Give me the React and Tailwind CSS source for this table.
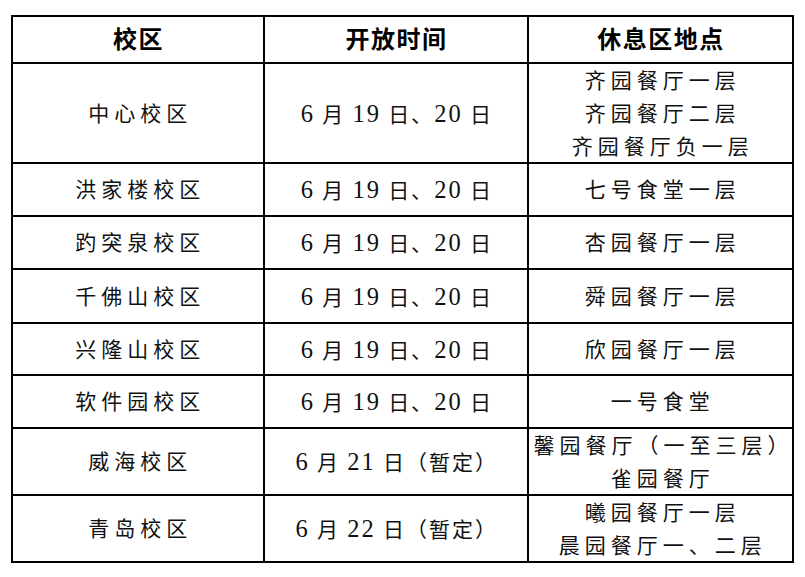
import React from "react";

const Num = ({ children }) => <span className="text-[24.5px]">{children}</span>;

const T1 = () => (
  <span>
    <Num>6</Num> 月 <Num>19</Num> 日、<Num>20</Num> 日
  </span>
);

const rows = [
  { campus: "中心校区", time: <T1 />, place: ["齐园餐厅一层", "齐园餐厅二层", "齐园餐厅负一层"] },
  { campus: "洪家楼校区", time: <T1 />, place: ["七号食堂一层"] },
  { campus: "趵突泉校区", time: <T1 />, place: ["杏园餐厅一层"] },
  { campus: "千佛山校区", time: <T1 />, place: ["舜园餐厅一层"] },
  { campus: "兴隆山校区", time: <T1 />, place: ["欣园餐厅一层"] },
  { campus: "软件园校区", time: <T1 />, place: ["一号食堂"] },
  {
    campus: "威海校区",
    time: (
      <span>
        <Num>6</Num> 月 <Num>21</Num> 日（暂定）
      </span>
    ),
    place: ["馨园餐厅（一至三层）", "雀园餐厅"],
  },
  {
    campus: "青岛校区",
    time: (
      <span>
        <Num>6</Num> 月 <Num>22</Num> 日（暂定）
      </span>
    ),
    place: ["曦园餐厅一层", "晨园餐厅一、二层"],
  },
];

const cjk = { fontFamily: '"Liberation Serif", "Noto Sans CJK SC", serif' };

export default function App() {
  return (
    <div className="w-[805px] h-[577px] bg-white pt-[15px] pl-[11px]" style={cjk}>
      <div className="grid w-fit grid-cols-[250.5px_262.5px_263.5px] grid-rows-[45.5px_98.5px_51.5px_51.5px_52.5px_50.5px_51.5px_65.5px_65.5px] gap-[1.5px] bg-black p-[1.5px]">
        {["校区", "开放时间", "休息区地点"].map((h) => (
          <div
            key={h}
            className="flex items-center justify-center bg-white pl-[1.5px] pt-[2px] text-[24px] font-bold tracking-[1.5px] text-black"
          >
            {h}
          </div>
        ))}
        {rows.map((r, i) => (
          <React.Fragment key={i}>
            <div className="flex items-center justify-center bg-white pl-[5px] pt-[3px] text-[21px] tracking-[5px] text-[#111]">
              {r.campus}
            </div>
            <div className="flex items-center justify-center bg-white pl-[2px] pt-[3px] text-[21px] tracking-[2px] text-[#111]">
              {r.time}
            </div>
            <div className="flex flex-col items-center justify-center bg-white pl-[5px] pt-[3px] text-[21px] leading-[33px] tracking-[5px] text-[#111]">
              {r.place.map((p) => (
                <div key={p}>{p}</div>
              ))}
            </div>
          </React.Fragment>
        ))}
      </div>
    </div>
  );
}
